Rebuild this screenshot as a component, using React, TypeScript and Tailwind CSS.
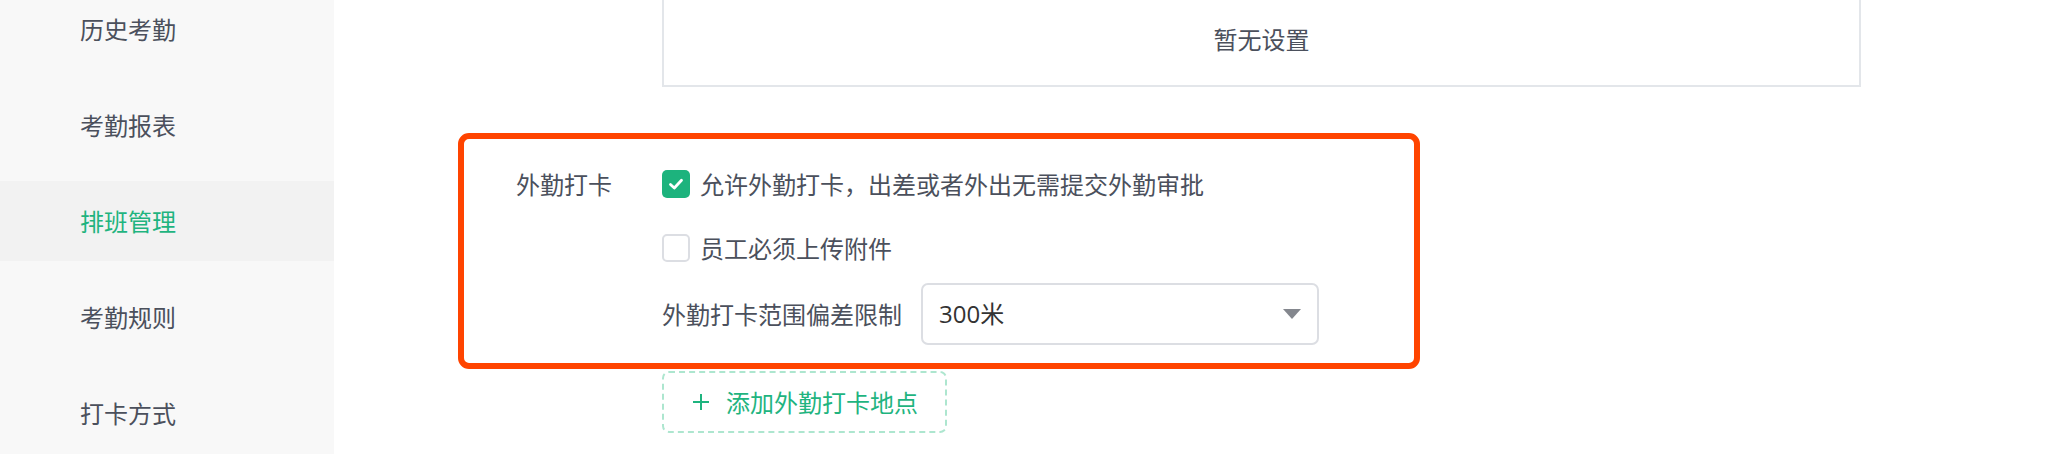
import React from "react";

const navItems = ["历史考勤", "考勤报表", "排班管理", "考勤规则", "打卡方式"];

function Check() {
  return (
    <svg width="16" height="16" viewBox="0 0 16 16" fill="none">
      <path d="M2.5 8.5 L6.3 12 L13.5 4.2" stroke="white" strokeWidth="2.8" strokeLinecap="round" strokeLinejoin="round" />
    </svg>
  );
}

export default function App() {
  return (
    <div
      className="flex w-[2060px] h-[454px] overflow-hidden bg-white text-[24px] text-[#4b505c]"
      style={{ fontFamily: '"Noto Sans CJK SC", "Noto Sans", sans-serif' }}
    >
      {/* Sidebar */}
      <aside className="w-[334px] shrink-0 bg-[#f8f8f8]">
        <div className="mt-[-11px] flex flex-col gap-[16px]">
          {navItems.map((t) => (
            <div
              key={t}
              className={
                t === "排班管理"
                  ? "h-[80px] flex items-center pl-[80px] bg-[#f2f2f2] text-[#1fb47f]"
                  : "h-[80px] flex items-center pl-[80px]"
              }
            >
              {t}
            </div>
          ))}
        </div>
      </aside>

      {/* Main */}
      <main className="flex-1 flex flex-col">
        <div className="ml-[328px] mt-[-10px] w-[1199px] h-[97px] border-2 border-[#e3e6ea] flex items-center justify-center leading-none">
          暂无设置
        </div>

        <div className="ml-[124px] mt-[46px] w-[962px] h-[236px] border-[6px] border-[#ff4400] rounded-[11px] flex pt-[25px]">
          <div className="w-[198px] shrink-0 pr-[50px] text-right h-[40px] leading-[40px]">外勤打卡</div>
          <div className="flex flex-col">
            <div className="h-[40px] flex items-center gap-[10px]">
              <span className="w-[28px] h-[28px] rounded-[5px] bg-[#1db37d] flex items-center justify-center">
                <Check />
              </span>
              <span>允许外勤打卡，出差或者外出无需提交外勤审批</span>
            </div>
            <div className="h-[40px] mt-[24px] flex items-center gap-[10px]">
              <span className="w-[28px] h-[28px] rounded-[5px] border-2 border-[#dcdee3] bg-white" />
              <span>员工必须上传附件</span>
            </div>
            <div className="mt-[15px] flex items-center gap-[19px]">
              <span>外勤打卡范围偏差限制</span>
              <div className="w-[398px] h-[62px] border-2 border-[#dcdee3] rounded-[7px] flex items-center justify-between pl-[16px] pr-[16px] text-[#333333]">
                <span style={{ fontFamily: '"Open Sans", "Noto Sans CJK SC", sans-serif' }}>300米</span>
                <svg width="18" height="10" viewBox="0 0 18 10">
                  <path d="M0 0 H18 L9 10 Z" fill="#84878e" />
                </svg>
              </div>
            </div>
          </div>
        </div>

        <div className="ml-[328px] mt-[2px] w-[285px] h-[62px] border-2 border-dashed border-[#ade6cf] rounded-[7px] flex items-center pl-[29px] text-[#1fb47f]">
          <svg width="16" height="16" viewBox="0 0 16 16" className="mr-[17px]">
            <path d="M8 0 V16 M0 8 H16" stroke="#1fb47f" strokeWidth="2" />
          </svg>
          <span>添加外勤打卡地点</span>
        </div>
      </main>
    </div>
  );
}
